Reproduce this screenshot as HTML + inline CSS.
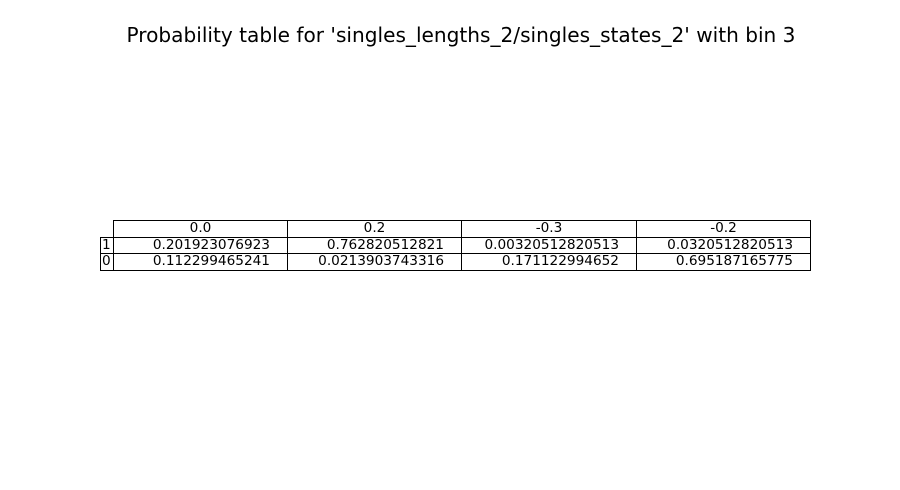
<!DOCTYPE html>
<html><head><meta charset="utf-8"><style>
body{margin:0;width:900px;height:490px;background:#fff;position:relative;overflow:hidden;font-family:"DejaVu Sans","Liberation Sans",sans-serif;color:#000}
.t{position:absolute;left:11px;width:900px;top:23px;text-align:center;font-size:20.1px;line-height:24px;white-space:nowrap}
.c{position:absolute;box-sizing:border-box;border:1px solid #000;font-size:13.65px;line-height:15px;white-space:nowrap;padding-top:0}
.h{text-align:center}
.r{text-align:right;padding-right:17px}
.l{text-align:left;padding-left:1px}
</style></head><body>
<div class="t">Probability table for 'singles_lengths_2/singles_states_2' with bin 3</div>
<div class="c h" style="left:113px;top:220px;width:175px;height:18px">0.0</div>
<div class="c h" style="left:287px;top:220px;width:175px;height:18px">0.2</div>
<div class="c h" style="left:461px;top:220px;width:176px;height:18px">-0.3</div>
<div class="c h" style="left:636px;top:220px;width:175px;height:18px">-0.2</div>
<div class="c l" style="left:100px;top:237px;width:14px;height:17px">1</div>
<div class="c r" style="left:113px;top:237px;width:175px;height:17px">0.201923076923</div>
<div class="c r" style="left:287px;top:237px;width:175px;height:17px">0.762820512821</div>
<div class="c r" style="left:461px;top:237px;width:176px;height:17px">0.00320512820513</div>
<div class="c r" style="left:636px;top:237px;width:175px;height:17px">0.0320512820513</div>
<div class="c l" style="left:100px;top:253px;width:14px;height:18px">0</div>
<div class="c r" style="left:113px;top:253px;width:175px;height:18px">0.112299465241</div>
<div class="c r" style="left:287px;top:253px;width:175px;height:18px">0.0213903743316</div>
<div class="c r" style="left:461px;top:253px;width:176px;height:18px">0.171122994652</div>
<div class="c r" style="left:636px;top:253px;width:175px;height:18px">0.695187165775</div>
</body></html>
